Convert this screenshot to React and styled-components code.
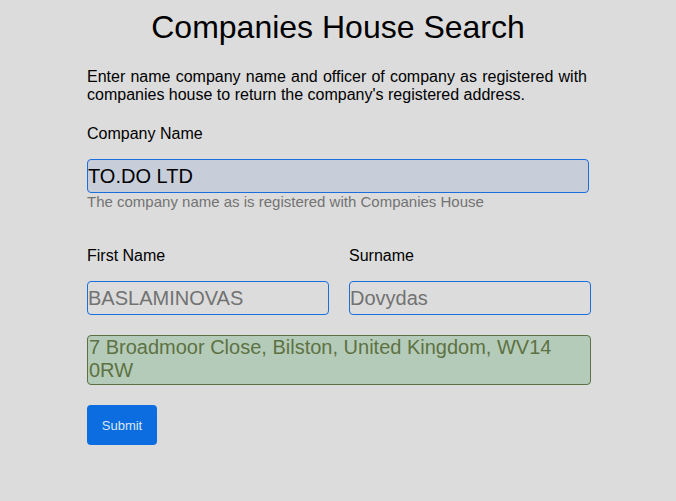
import React from "react";
import styled, { createGlobalStyle } from "styled-components";

const GlobalStyle = createGlobalStyle`
  html, body {
    margin: 0;
    padding: 0;
    background: #dcdcdc;
  }
  body {
    font-family: "Liberation Sans", Arial, sans-serif;
    color: #000;
  }
`;

const Page = styled.div`
  min-height: 501px;
  background: #dcdcdc;
  padding-top: 9px;
  box-sizing: border-box;
`;

const Title = styled.h1`
  margin: 0;
  font-size: 32px;
  font-weight: normal;
  text-align: center;
  line-height: 37px;
`;

const Form = styled.form`
  width: 504px;
  margin: 22px 0 0 87px;
  display: flex;
  flex-direction: column;
`;

const Intro = styled.p`
  width: 500px;
  margin: 0;
  font-size: 16px;
  line-height: 18px;
  text-align: justify;
`;

const Label = styled.label`
  display: block;
  font-size: 16px;
  line-height: 18px;
  margin-top: ${(p) => p.$top || 0}px;
`;

const TextInput = styled.input`
  box-sizing: border-box;
  display: block;
  width: ${(p) => p.$width || "100%"};
  height: 34px;
  margin-top: 16px;
  padding: 0;
  border: 1px solid #1a6fdc;
  border-radius: 4px;
  background: ${(p) => p.$bg || "transparent"};
  font-family: "Liberation Sans", Arial, sans-serif;
  font-size: 20px;
  color: #000;
  outline: none;

  &::placeholder {
    color: #727272;
  }
`;

const Help = styled.div`
  font-size: 15px;
  line-height: 17px;
  color: #737373;
`;

const Row = styled.div`
  display: grid;
  grid-template-columns: 1fr 1fr;
  column-gap: 20px;
  margin-top: 37px;
`;

const Field = styled.div`
  display: flex;
  flex-direction: column;
`;

const Address = styled.div`
  box-sizing: border-box;
  margin-top: 20px;
  height: 50px;
  padding: 0 1px;
  border: 1px solid #5d7243;
  border-radius: 4px;
  background: #b5cbb9;
  color: #5d7243;
  font-size: 20px;
  line-height: 23px;
`;

const SubmitButton = styled.button`
  align-self: flex-start;
  margin-top: 20px;
  width: 70px;
  height: 40px;
  border: none;
  border-radius: 4px;
  background: #0b6ddf;
  color: #dce6f5;
  font-family: "Liberation Sans", Arial, sans-serif;
  font-size: 13px;
  cursor: pointer;
`;

const App = () => {
  return (
    <Page>
      <GlobalStyle />
      <Title>Companies House Search</Title>
      <Form onSubmit={(e) => e.preventDefault()}>
        <Intro>
          Enter name company name and officer of company as registered with
          companies house to return the company's registered address.
        </Intro>
        <Label $top={21}>Company Name</Label>
        <TextInput
          $width="502px"
          $bg="#c8ced9"
          value="TO.DO LTD"
          readOnly
        />
        <Help>The company name as is registered with Companies House</Help>
        <Row>
          <Field>
            <Label>First Name</Label>
            <TextInput placeholder="BASLAMINOVAS" />
          </Field>
          <Field>
            <Label>Surname</Label>
            <TextInput placeholder="Dovydas" />
          </Field>
        </Row>
        <Address>7 Broadmoor Close, Bilston, United Kingdom, WV14 0RW</Address>
        <SubmitButton type="submit">Submit</SubmitButton>
      </Form>
    </Page>
  );
};

export default App;
